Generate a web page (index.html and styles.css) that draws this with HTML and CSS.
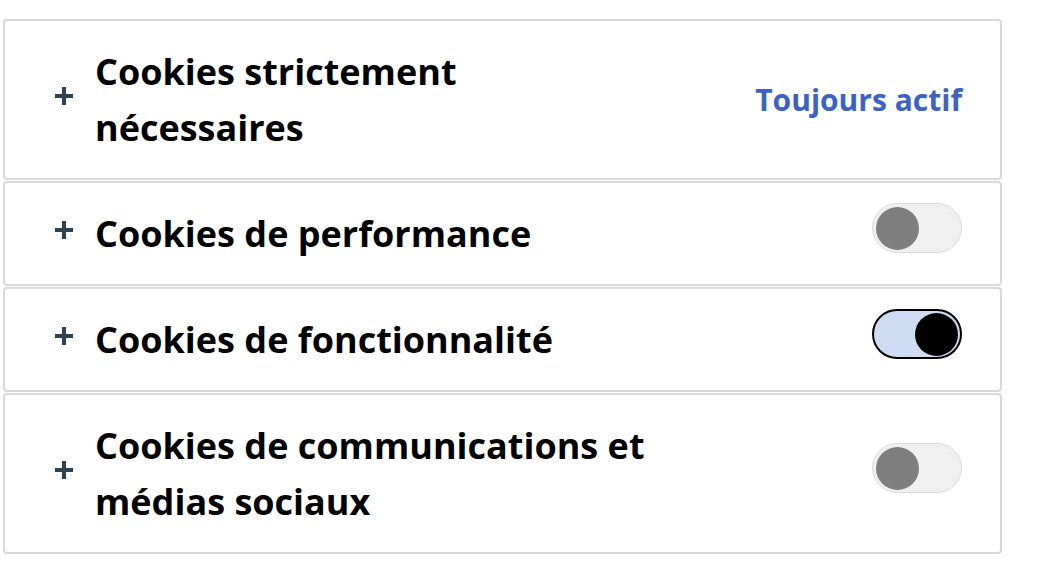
FILE: index.html
```html
<!DOCTYPE html>
<html lang="fr">
<head>
<meta charset="utf-8">
<link rel="stylesheet" href="styles.css">
</head>
<body>
<div class="list">
  <div class="item">
    <div class="head">
      <span class="plus"></span>
      <h3 class="title">Cookies strictement nécessaires</h3>
    </div>
    <span class="always">Toujours actif</span>
  </div>
  <div class="item">
    <div class="head">
      <span class="plus"></span>
      <h3 class="title">Cookies de performance</h3>
    </div>
    <span class="switch"><span class="knob"></span></span>
  </div>
  <div class="item">
    <div class="head">
      <span class="plus"></span>
      <h3 class="title">Cookies de fonctionnalité</h3>
    </div>
    <span class="switch on"><span class="knob"></span></span>
  </div>
  <div class="item tall">
    <div class="head">
      <span class="plus"></span>
      <h3 class="title">Cookies de communications et médias sociaux</h3>
    </div>
    <span class="switch"><span class="knob"></span></span>
  </div>
</div>
</body>
</html>
```

FILE: styles.css
```css
html, body {
  margin: 0;
  padding: 0;
  background: #ffffff;
}
body {
  font-family: "Open Sans", "Liberation Sans", sans-serif;
  color: #000;
}
.list {
  margin: 19px 0 0 3px;
  width: 999px;
  display: flex;
  flex-direction: column;
  gap: 1px;
}
.item {
  box-sizing: border-box;
  border: 2px solid #dadada;
  border-radius: 4px;
  display: flex;
  align-items: center;
  justify-content: space-between;
  padding: 22.5px 38px 22.5px 49px;
}
.head {
  display: flex;
  align-items: center;
  gap: 21px;
}
.plus {
  position: relative;
  width: 20px;
  height: 20px;
  flex: none;
  margin-top: -7px;
}
.plus::before, .plus::after {
  content: "";
  position: absolute;
  background: #2b4257;
}
.plus::before {
  left: 1px; right: 1px; top: 8px; height: 4px;
}
.plus::after {
  top: 1px; bottom: 1px; left: 8px; width: 4px;
}
.title {
  margin: 0;
  font-size: 36px;
  font-weight: 700;
  line-height: 56px;
  max-width: 560px;
}
.always {
  font-size: 30px;
  font-weight: 700;
  color: #3b63c3;
}
.switch {
  box-sizing: border-box;
  width: 90px;
  height: 50px;
  margin-top: -11px;
  border-radius: 25px;
  background: #f0f0f0;
  border: 1.5px solid #dcdcdc;
  display: flex;
  align-items: center;
  padding: 0 2.5px;
  flex: none;
}
.knob {
  width: 43px;
  height: 43px;
  border-radius: 50%;
  background: #7f7f7f;
}
.switch.on {
  background: #cddcf2;
  border: 2px solid #000;
  justify-content: flex-end;
  padding: 0 2px;
}
.switch.on .knob {
  background: #000;
}
```
